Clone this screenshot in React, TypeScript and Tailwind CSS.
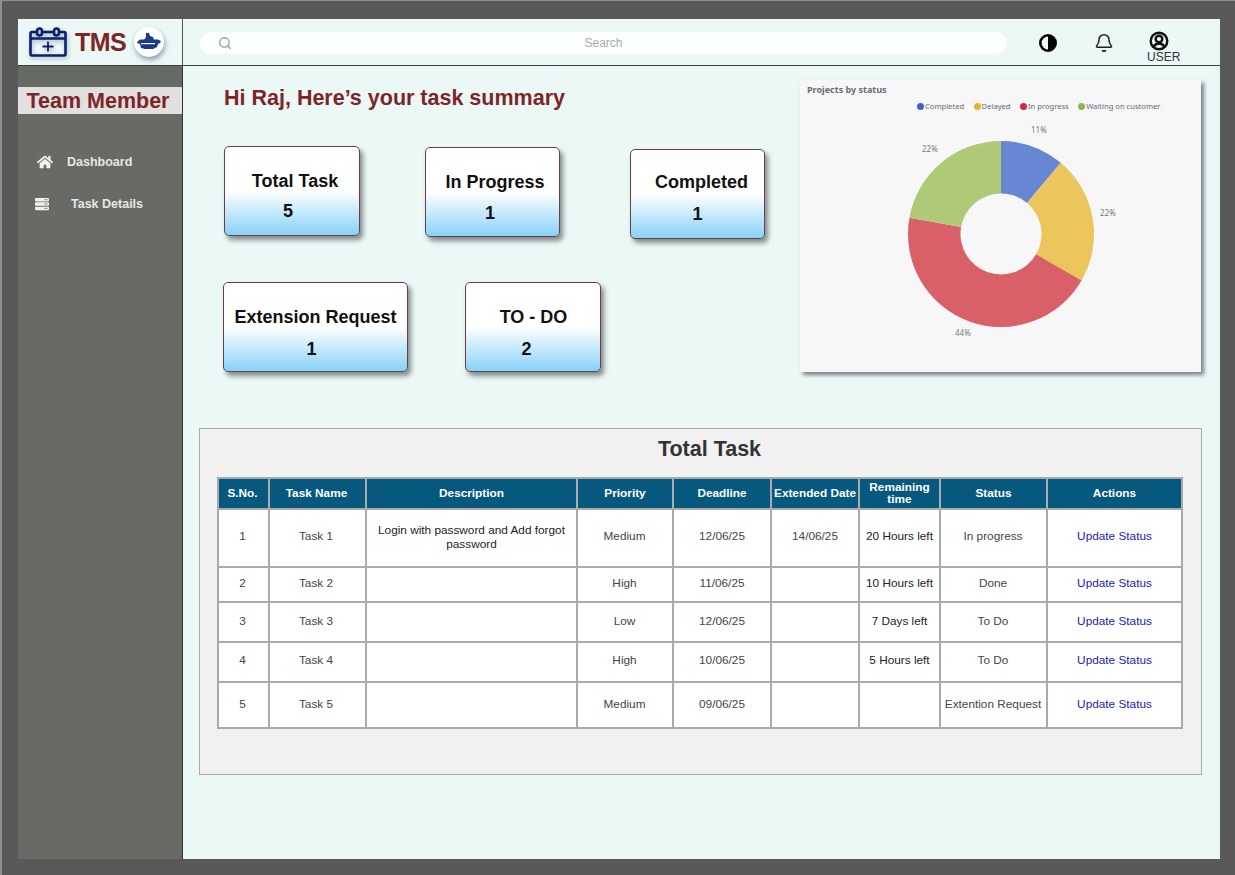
import { Bell, Search } from 'lucide-react';
import { FaHome, FaServer } from 'react-icons/fa';

const rows = [
  { no: 1, name: 'Task 1', desc: 'Login with password and Add forgot password', priority: 'Medium', deadline: '12/06/25', ext: '14/06/25', left: '20 Hours left', status: 'In progress', h: 'h-[58px] [&>td]:pb-[2px]' },
  { no: 2, name: 'Task 2', desc: '', priority: 'High', deadline: '11/06/25', ext: '', left: '10 Hours left', status: 'Done', h: 'h-[35px] [&>td]:pb-[2px]' },
  { no: 3, name: 'Task 3', desc: '', priority: 'Low', deadline: '12/06/25', ext: '', left: '7 Days left', status: 'To Do', h: 'h-[40px]' },
  { no: 4, name: 'Task 4', desc: '', priority: 'High', deadline: '10/06/25', ext: '', left: '5 Hours left', status: 'To Do', h: 'h-[40px] [&>td]:pb-[2px]' },
  { no: 5, name: 'Task 5', desc: '', priority: 'Medium', deadline: '09/06/25', ext: '', left: '', status: 'Extention Request', h: 'h-[46px]' },
];

const headers = ['S.No.', 'Task Name', 'Description', 'Priority', 'Deadline', 'Extended Date', 'Remaining time', 'Status', 'Actions'];
const colWidths = ['w-[51px]', 'w-[97px]', 'w-[211px]', 'w-[96px]', 'w-[98px]', 'w-[88px]', 'w-[81px]', 'w-[107px]', 'w-[135px]'];

function CalendarLogo() {
  return (
    <svg width="38" height="30" viewBox="0 0 38 30" fill="none" stroke="#0b1f6e" strokeWidth="2.6" className="drop-shadow-[1px_2px_2px_rgba(60,80,110,0.4)]">
      <path d="M8 5H3a1.500 1.500 0 0 0-1.500 1.500V27a1.500 1.500 0 0 0 1.500 1.500h32a1.500 1.500 0 0 0 1.500-1.500V6.500A1.500 1.500 0 0 0 35 5h-5" />
      <path d="M14 5h10" />
      <path d="M2 11.500h34" />
      <rect x="8" y="1.500" width="5" height="7" rx="2.500" />
      <rect x="25" y="1.500" width="5" height="7" rx="2.500" />
      <path d="M19 14.500v10M13.500 19.500h11" strokeWidth="1.800" />
    </svg>
  );
}

function ShipBadge() {
  return (
    <div className="flex h-[30px] w-[30px] items-center justify-center rounded-full bg-white shadow-[1px_3px_5px_rgba(60,80,110,0.55)]">
      <svg width="26" height="20" viewBox="0 0 26 20" fill="#1a3a8a">
        <path d="M10 1h3l1 3 3 1 1 3H8l2-3z" />
        <path d="M4 7.500h18l3 1.500-1 2-2 1-1 3-4 2H9l-4-1-1-4-3-1 1-2z" />
        <path d="M5 11h14v1.200H5z" fill="#fff" />
      </svg>
    </div>
  );
}

function ContrastIcon() {
  return (
    <svg width="18" height="18" viewBox="0 0 18 18">
      <circle cx="9" cy="9" r="7.700" fill="none" stroke="#000" strokeWidth="2.600" />
      <path d="M9 1a8 8 0 0 1 0 16z" fill="#000" />
    </svg>
  );
}

function UserIcon() {
  return (
    <svg width="20" height="20" viewBox="0 0 20 20" fill="none" stroke="#111" strokeWidth="2.400">
      <circle cx="10" cy="10" r="8.300" />
      <circle cx="10" cy="8" r="3.300" />
      <path d="M4.500 15.500c1.500-2 3.500-3 5.500-3s4 1 5.500 3" />
    </svg>
  );
}

// donut wedge between two percentages, starting from 12 o'clock
function wedge(from: number, to: number) {
  const cx = 100;
  const cy = 100;
  const R = 93;
  const r = 40.5;
  const pt = (rad: number, pct: number) => {
    const a = (pct / 100) * 2 * Math.PI;
    return `${(cx + rad * Math.sin(a)).toFixed(2)} ${(cy - rad * Math.cos(a)).toFixed(2)}`;
  };
  const large = to - from > 50 ? 1 : 0;
  return `M${pt(R, from)}A${R} ${R} 0 ${large} 1 ${pt(R, to)}L${pt(r, to)}A${r} ${r} 0 ${large} 0 ${pt(r, from)}Z`;
}

function StatCard({ label, value, className, labelClass, valueClass }: { label: string; value: number; className: string; labelClass: string; valueClass: string }) {
  return (
    <div className={`flex h-[90px] flex-col items-center rounded-[5px] border border-[#6d3d4a] bg-[linear-gradient(to_bottom,#ffffff_50%,#88d2f8_100%)] text-[#111] shadow-[3px_4px_5px_rgba(70,80,80,0.65)] ${className}`}>
      <div className={`text-[18px] leading-[22px] font-bold ${labelClass}`}>{label}</div>
      <div className={`text-[18px] leading-[22px] font-bold ${valueClass}`}>{value}</div>
    </div>
  );
}

function Legend({ color, label }: { color: string; label: string }) {
  return (
    <span className="flex items-center gap-px">
      <span className={`h-[7px] w-[7px] rounded-full ${color}`} />
      {label}
    </span>
  );
}

export default function App() {
  return (
    <div className="h-[875px] w-[1235px] overflow-hidden border-t border-l-2 border-[#8f8f8f] bg-[#595959] pt-[18px] pl-[16px] font-['Liberation_Sans',sans-serif]">
      <div className="flex h-[840px] w-[1202px] flex-col bg-[#ebf8f6]">
        {/* top bar */}
        <header className="flex h-[47px] shrink-0 border-b border-[#3f3f3f]">
          <div className="flex w-[165px] shrink-0 items-center gap-[8px] border-r border-[#555] pl-[11px]">
            <CalendarLogo />
            <span className="text-[25px] leading-none font-bold tracking-[-0.5px] text-[#7d2527]">TMS</span>
            <ShipBadge />
          </div>
          <div className="flex flex-1 items-center pt-[2px]">
            <div className="relative ml-[17px] flex h-[22px] w-[807px] items-center justify-center rounded-full bg-[#fdfefe] text-[12px] text-[#a9a9a9]">
              <Search className="absolute top-[4px] left-[18px] text-[#9a9a9a]" size={14} strokeWidth={2.2} />
              Search
            </div>
            <div className="ml-[32px]"><ContrastIcon /></div>
            <Bell className="ml-[37px] text-[#222]" size={20} strokeWidth={1.8} />
            <div className="ml-[33px] flex flex-col items-start self-start pt-[10px]">
              <div className="ml-[2px]"><UserIcon /></div>
              <span className="text-[12px] leading-[13px] text-[#333]">USER</span>
            </div>
          </div>
        </header>

        <div className="flex min-h-0 flex-1">
          {/* sidebar */}
          <aside className="w-[165px] shrink-0 border-r border-[#333] bg-[#686a65] pt-[21px]">
            <div className="flex h-[27px] items-center justify-center bg-[#e1dfdf] pt-[2px] pr-[4px] text-[21.500px] font-bold text-[#7d2527]">
              Team Member
            </div>
            <nav className="mt-[36px] text-[12.500px] font-bold text-[#e6e6e6]">
              <div className="flex h-[24px] items-center pl-[19px]">
                <FaHome size={16} className="text-[#f2f2f2]" />
                <span className="ml-[14px]">Dashboard</span>
              </div>
              <div className="mt-[18px] flex h-[24px] items-center pl-[17px]">
                <FaServer size={14} className="text-[#f2f2f2]" />
                <span className="ml-[22px]">Task Details</span>
              </div>
            </nav>
          </aside>

          {/* main */}
          <main className="min-w-0 flex-1">
            <div className="flex h-[362px]">
              <div className="w-[617px] shrink-0 pl-[41px]">
                <h1 className="mt-[19px] text-[21.500px] leading-[26px] font-bold text-[#7d2527]">Hi Raj, Here’s your task summary</h1>
                <div className="mt-[35px] flex items-start">
                  <StatCard label="Total Task" value={5} className="w-[136px]" labelClass="mt-[23px] ml-[6px]" valueClass="mt-[8px] mr-[8px]" />
                  <StatCard label="In Progress" value={1} className="mt-px ml-[65px] w-[135px]" labelClass="mt-[23px] ml-[5px]" valueClass="mt-[9px] mr-[5px]" />
                  <StatCard label="Completed" value={1} className="mt-[3px] ml-[70px] w-[135px]" labelClass="mt-[21px] ml-[8px]" valueClass="mt-[10px]" />
                </div>
                <div className="mt-[43px] -ml-px flex items-start">
                  <StatCard label="Extension Request" value={1} className="w-[185px]" labelClass="mt-[23px]" valueClass="mt-[10px] mr-[8px]" />
                  <StatCard label="TO - DO" value={2} className="ml-[57px] w-[136px]" labelClass="mt-[23px] ml-[1px]" valueClass="mt-[10px] mr-[13px]" />
                </div>
              </div>

              <section className="relative mt-[14px] h-[292px] w-[401px] bg-[#f7f7f7] shadow-[3px_3px_4px_rgba(80,90,95,0.75)]">
                <div className="pt-[3px] pl-[7px] font-['Noto_Sans',sans-serif] text-[9px] leading-[13px] font-bold text-[#6a6a7a]">Projects by status</div>
                <div className="mt-[4px] ml-[117px] flex gap-[9.500px] font-['Noto_Sans',sans-serif] text-[7.600px] leading-[12px] text-[#666a75]">
                  <Legend color="bg-[#3b62c4]" label="Completed" />
                  <Legend color="bg-[#eeb02e]" label="Delayed" />
                  <Legend color="bg-[#d22b3c]" label="In progress" />
                  <Legend color="bg-[#8db84f]" label="Waiting on customer" />
                </div>
                <svg width="200" height="200" viewBox="0 0 200 200" className="absolute top-[54px] left-[101px]">
                  <path d={wedge(0, 11.11)} fill="#6786d3" />
                  <path d={wedge(11.11, 33.33)} fill="#ecc65c" />
                  <path d={wedge(33.33, 77.78)} fill="#d95f69" />
                  <path d={wedge(77.78, 100)} fill="#afca76" />
                </svg>
                <span className="absolute top-[44px] left-[231px] font-['Noto_Sans',sans-serif] text-[8px] text-[#777]">11%</span>
                <span className="absolute top-[63px] left-[122px] font-['Noto_Sans',sans-serif] text-[8px] text-[#777]">22%</span>
                <span className="absolute top-[127px] left-[300px] font-['Noto_Sans',sans-serif] text-[8px] text-[#777]">22%</span>
                <span className="absolute top-[247px] left-[155px] font-['Noto_Sans',sans-serif] text-[8px] text-[#777]">44%</span>
              </section>
            </div>

            {/* task table */}
            <section className="ml-[16px] h-[347px] w-[1003px] border border-[#a9acac] bg-[#f1f1f1] pl-[17px]">
              <h2 className="h-[48px] pt-[6px] pr-px pl-[2px] text-center text-[21.500px] leading-[28px] font-bold text-[#333]">Total Task</h2>
              <table className="w-[964px] table-fixed border-collapse border-2 border-[#aaa] bg-white text-[11.800px] text-[#444]">
                <colgroup>
                  {colWidths.map((w) => (
                    <col key={w} className={w} />
                  ))}
                </colgroup>
                <thead>
                  <tr className="h-[31px] bg-[#07587e] text-white">
                    {headers.map((h, i) => (
                      <th key={h} className={`border-2 border-[#aaa] pb-[2px] text-[11.800px] leading-[12px] font-bold ${i < 2 ? 'pr-[2px]' : ''}`}>{h}</th>
                    ))}
                  </tr>
                </thead>
                <tbody>
                  {rows.map((r) => (
                    <tr key={r.no} className={r.h}>
                      <td className="border-2 border-[#aaa] pr-[2px] text-center">{r.no}</td>
                      <td className="border-2 border-[#aaa] pr-[3px] text-center">{r.name}</td>
                      <td className="border-2 border-[#aaa] px-2 text-center leading-[14px] text-[#222]">{r.desc}</td>
                      <td className="border-2 border-[#aaa] pr-[1px] text-center">{r.priority}</td>
                      <td className="border-2 border-[#aaa] text-center">{r.deadline}</td>
                      <td className="border-2 border-[#aaa] text-center">{r.ext}</td>
                      <td className="border-2 border-[#aaa] text-center text-[#222]">{r.left}</td>
                      <td className="border-2 border-[#aaa] pr-[1px] text-center">{r.status}</td>
                      <td className="border-2 border-[#aaa] text-center text-[#2222b0]">Update Status</td>
                    </tr>
                  ))}
                </tbody>
              </table>
            </section>
          </main>
        </div>
      </div>
    </div>
  );
}
